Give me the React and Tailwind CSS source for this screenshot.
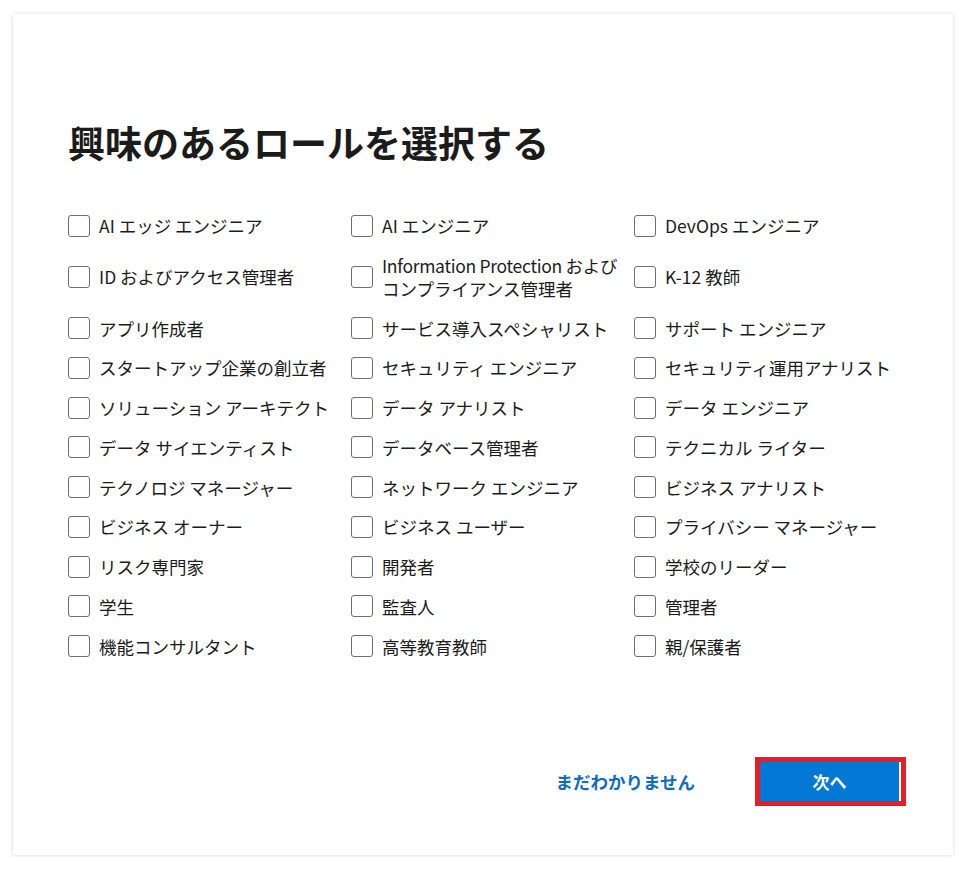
import React from "react";

const roles = [
  "AI エッジ エンジニア",
  "AI エンジニア",
  "DevOps エンジニア",
  "ID およびアクセス管理者",
  "INFO",
  "K-12 教師",
  "アプリ作成者",
  "サービス導入スペシャリスト",
  "サポート エンジニア",
  "スタートアップ企業の創立者",
  "セキュリティ エンジニア",
  "セキュリティ運用アナリスト",
  "ソリューション アーキテクト",
  "データ アナリスト",
  "データ エンジニア",
  "データ サイエンティスト",
  "データベース管理者",
  "テクニカル ライター",
  "テクノロジ マネージャー",
  "ネットワーク エンジニア",
  "ビジネス アナリスト",
  "ビジネス オーナー",
  "ビジネス ユーザー",
  "プライバシー マネージャー",
  "リスク専門家",
  "開発者",
  "学校のリーダー",
  "学生",
  "監査人",
  "管理者",
  "機能コンサルタント",
  "高等教育教師",
  "親/保護者",
];

function Item({ label }) {
  const info = label === "INFO";
  return (
    <label className="flex items-center gap-[9px]">
      <span className="block w-[22px] h-[22px] shrink-0 rounded-[3px] border border-[#6f6f6f] bg-white" />
      <span className="leading-[23px] text-[#1b1b1b] whitespace-nowrap">
        {info ? (
          <>
            <span className="tracking-[-0.3px]">Information Protection および</span>
            <br />
            コンプライアンス管理者
          </>
        ) : (
          label
        )}
      </span>
    </label>
  );
}

export default function App() {
  return (
    <div
      className="min-h-[874px] bg-white pt-[14px] pl-[13px]"
      style={{ fontFamily: '"Noto Sans CJK JP", "Noto Sans", sans-serif' }}
    >
      <div className="w-[940px] h-[841px] bg-white shadow-[0_0_4px_rgba(0,0,0,0.16)] pt-[104px] pl-[55px] pr-[47px] flex flex-col">
        <h1 className="text-[37px] leading-[48px] font-bold text-[#1b1b1b]">
          興味のあるロールを選択する
        </h1>
        <div className="mt-[48px] grid grid-cols-[283px_283px_283px] gap-y-[16.75px] text-[17.5px]">
          {roles.map((r) => (
            <Item key={r} label={r} />
          ))}
        </div>
        <div className="mt-auto mb-[49px] flex items-center justify-end gap-[60px]">
          <button className="text-[17.5px] font-bold text-[#0f6cbd] leading-[24px]">
            まだわかりません
          </button>
          <div className="border-[5px] border-[#ec1c24] flex">
            <button className="w-[141px] h-[39px] bg-[#0078d4] text-white font-bold text-[17px] border-r-[2px] border-white">
              次へ
            </button>
          </div>
        </div>
      </div>
    </div>
  );
}
